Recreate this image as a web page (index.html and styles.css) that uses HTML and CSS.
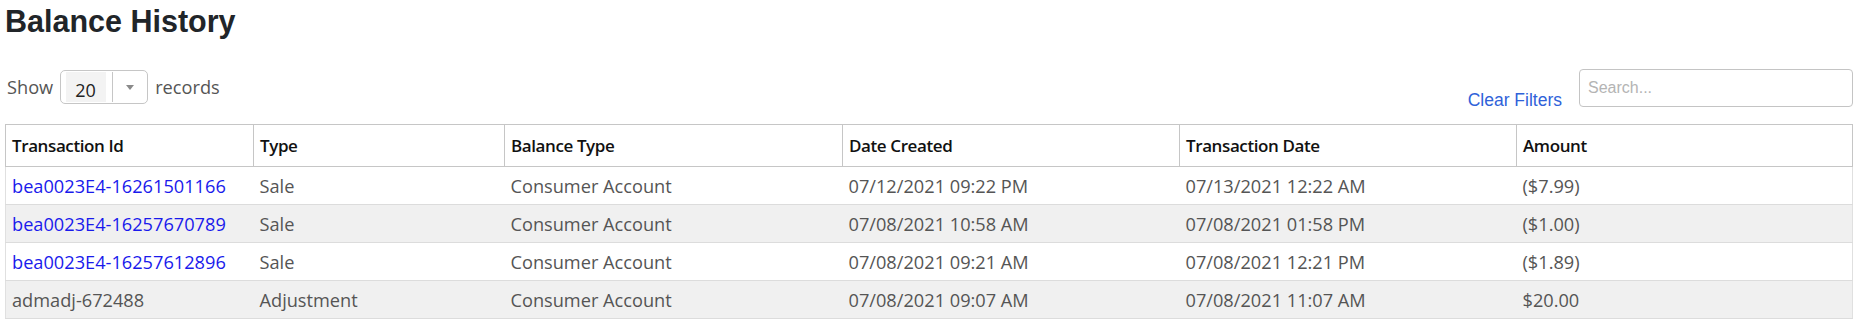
FILE: index.html
```html
<!DOCTYPE html>
<html lang="en">
<head>
<meta charset="utf-8">
<title>Balance History</title>
<link rel="stylesheet" href="styles.css">
</head>
<body>
<div class="page">
  <h1 class="title">Balance History</h1>
  <div class="toolbar">
    <div class="length">
      <span class="label">Show</span>
      <div class="select">
        <span class="select-value">20</span>
        <span class="select-toggle"><span class="caret"></span></span>
      </div>
      <span class="label">records</span>
    </div>
    <div class="filters">
      <a class="clear" href="#">Clear Filters</a>
      <input class="search" type="text" placeholder="Search...">
    </div>
  </div>
  <table class="grid">
    <colgroup>
      <col class="c1"><col class="c2"><col class="c3"><col class="c4"><col class="c5"><col class="c6">
    </colgroup>
    <thead>
      <tr>
        <th>Transaction Id</th>
        <th>Type</th>
        <th>Balance Type</th>
        <th>Date Created</th>
        <th>Transaction Date</th>
        <th>Amount</th>
      </tr>
    </thead>
    <tbody>
      <tr>
        <td><a class="link" href="#">bea0023E4-16261501166</a></td>
        <td>Sale</td>
        <td>Consumer Account</td>
        <td>07/12/2021 09:22 PM</td>
        <td>07/13/2021 12:22 AM</td>
        <td>($7.99)</td>
      </tr>
      <tr>
        <td><a class="link" href="#">bea0023E4-16257670789</a></td>
        <td>Sale</td>
        <td>Consumer Account</td>
        <td>07/08/2021 10:58 AM</td>
        <td>07/08/2021 01:58 PM</td>
        <td>($1.00)</td>
      </tr>
      <tr>
        <td><a class="link" href="#">bea0023E4-16257612896</a></td>
        <td>Sale</td>
        <td>Consumer Account</td>
        <td>07/08/2021 09:21 AM</td>
        <td>07/08/2021 12:21 PM</td>
        <td>($1.89)</td>
      </tr>
      <tr>
        <td>admadj-672488</td>
        <td>Adjustment</td>
        <td>Consumer Account</td>
        <td>07/08/2021 09:07 AM</td>
        <td>07/08/2021 11:07 AM</td>
        <td>$20.00</td>
      </tr>
    </tbody>
  </table>
</div>
</body>
</html>
```

FILE: styles.css
```css
* { box-sizing: border-box; }

body {
  margin: 0;
  background: #ffffff;
  font-family: "Open Sans", "Noto Sans", sans-serif;
  color: #555555;
}

.page {
  padding: 3px 8px 0 5px;
}

.title {
  margin: 0;
  font-family: "Liberation Sans", Arial, sans-serif;
  font-size: 30.5px;
  line-height: 36px;
  font-weight: bold;
  color: #212529;
}

.toolbar {
  margin-top: 30px;
  height: 38px;
  display: flex;
  justify-content: space-between;
  align-items: flex-start;
}

.length {
  margin-top: 1px;
  margin-left: 2px;
  display: flex;
  align-items: center;
  gap: 7px;
  font-size: 18.2px;
  color: #555555;
}

.select {
  width: 88px;
  height: 34px;
  border: 1px solid #c6c6c6;
  border-radius: 5px;
  padding: 1px 0 1px 5px;
  display: flex;
  align-items: stretch;
  background: #ffffff;
}

.select-value {
  width: 40px;
  background: #f3f3f3;
  padding-left: 9px;
  font-size: 18px;
  line-height: 20px;
  color: #222222;
  display: flex;
  align-items: flex-end;
  padding-bottom: 2px;
}

.select-toggle {
  margin-left: 6px;
  border-left: 1px solid #c6c6c6;
  flex: 1;
  display: flex;
  align-items: center;
  justify-content: center;
}

.caret {
  width: 0;
  height: 0;
  border-left: 4.5px solid transparent;
  border-right: 4.5px solid transparent;
  border-top: 5px solid #8a8a8a;
  margin-top: 1px;
}

.filters {
  display: flex;
  align-items: flex-start;
  gap: 17px;
}

.clear {
  padding-top: 21px;
  font-family: "Liberation Sans", Arial, sans-serif;
  font-size: 17.5px;
  line-height: 20px;
  color: #2f62d9;
  text-decoration: none;
}

.search {
  width: 274px;
  height: 38px;
  margin: 0;
  border: 1px solid #c4c4c4;
  border-radius: 4px;
  padding: 0 8px;
  font-family: "Liberation Sans", Arial, sans-serif;
  font-size: 16px;
  color: #333333;
  outline: none;
}

.search::placeholder {
  color: #b4b4b4;
}

.grid {
  margin-top: 17px;
  width: 100%;
  border-collapse: collapse;
  table-layout: fixed;
  font-size: 18.2px;
}

.c1 { width: 248px; }
.c2 { width: 251px; }
.c3 { width: 338px; }
.c4 { width: 337px; }
.c5 { width: 337px; }

.grid th {
  height: 42px;
  padding: 0 6px;
  border: 1px solid #c6c6c6;
  text-align: left;
  font-size: 17px;
  letter-spacing: -0.4px;
  font-weight: 600;
  color: #111111;
  vertical-align: middle;
  white-space: nowrap;
}

.grid td {
  height: 38px;
  padding: 0 6px;
  border-bottom: 1px solid #dcdcdc;
  vertical-align: middle;
  white-space: nowrap;
  color: #555555;
}

.grid td:first-child { border-left: 1px solid #e0e0e0; }
.grid td:last-child { border-right: 1px solid #e0e0e0; }

.grid tbody tr:nth-child(even) td {
  background: #f0f0f0;
}

.link {
  color: #1a1aec;
  text-decoration: none;
}
```
